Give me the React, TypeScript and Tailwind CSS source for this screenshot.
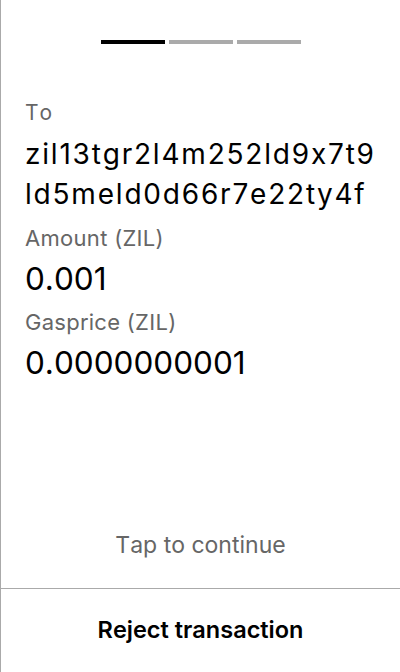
const steps = [true, false, false];

export default function App() {
  return (
    <div className="flex h-[672px] w-[400px] flex-col border-l border-[#aaaaaa] bg-white font-[Inter,'Noto_Sans',sans-serif] [font-kerning:none] [font-feature-settings:'calt'_0]">
      <div className="flex justify-center gap-1 pt-10">
        {steps.map((active, i) => (
          <div key={i} className={`h-1 w-16 ${active ? "bg-black" : "bg-[#aaaaaa]"}`} />
        ))}
      </div>

      <div className="flex flex-1 flex-col px-6 pt-[57px]">
        <p className="text-[21px] leading-[24px] tracking-[1px] text-[#666666]">To</p>
        <p className="mt-[9px] break-all text-[28px] leading-[40px] tracking-[1.8px] text-black">
          zil13tgr2l4m252ld9x7t9ld5meld0d66r7e22ty4f
        </p>

        <p className="mt-[10px] text-[22px] leading-[28px] tracking-[0.3px] text-[#666666]">Amount (ZIL)</p>
        <p className="mt-[7px] text-[31.5px] leading-[40px] text-black">0.001</p>

        <p className="mt-[9px] text-[22px] leading-[28px] tracking-[0.3px] text-[#666666]">Gasprice (ZIL)</p>
        <p className="mt-[7px] text-[31.5px] leading-[40px] text-black">0.0000000001</p>
      </div>

      <button className="pb-[29px] text-center text-[23px] leading-[28px] text-[#666666]">
        Tap to continue
      </button>

      <div className="border-t border-[#aaaaaa]">
        <button className="flex h-[83px] w-full items-center justify-center pb-[2px] text-[23.5px] leading-[30px] font-semibold text-black">
          Reject transaction
        </button>
      </div>
    </div>
  );
}
